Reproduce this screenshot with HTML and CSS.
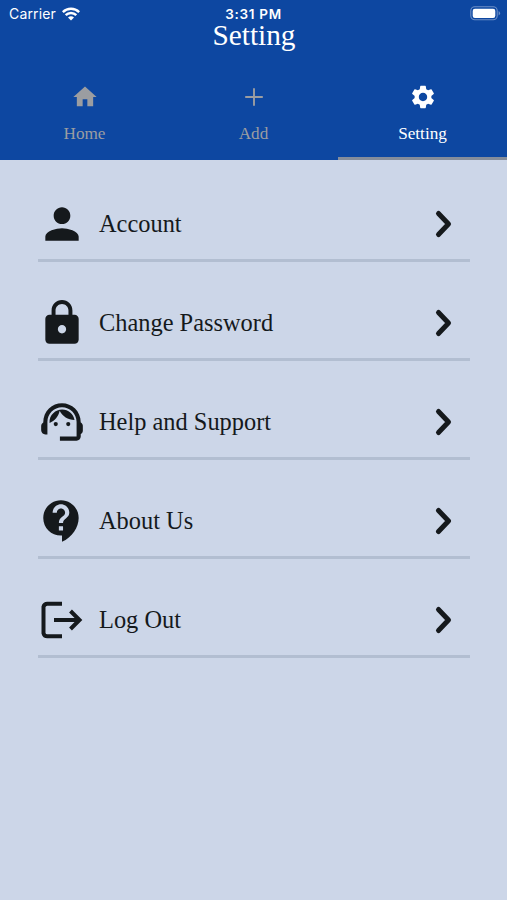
FILE: index.html
```html
<!DOCTYPE html>
<html lang="en">
<head>
<meta charset="utf-8">
<title>Setting</title>
<link rel="stylesheet" href="styles.css">
</head>
<body>
<header class="header">
  <div class="status">
    <div class="carrier"><span>Carrier</span>
      <svg width="18" height="14" viewBox="0 0 18 14"><g fill="none" stroke="#fff" stroke-width="2.5"><path d="M.8 5.1a11.7 11.7 0 0 1 16.4 0"/><path d="M3.7 8.2a7.5 7.5 0 0 1 10.6 0"/></g><path fill="#fff" d="M9 13.6 6 10.6a4.3 4.3 0 0 1 6 0z"/></svg>
    </div>
    <div class="time">3:31 PM</div>
    <div class="battery">
      <svg width="31" height="15" viewBox="0 0 31 15"><rect x=".8" y=".8" width="26.4" height="13" rx="4" fill="none" stroke="#6d8fc6" stroke-width="1.1"/><rect x="2.7" y="2.7" width="22.6" height="9.2" rx="2.2" fill="#fff"/><path d="M28.6 5v4.6q1.5-.8 1.5-2.3T28.6 5z" fill="#6d8fc6"/></svg>
    </div>
  </div>
  <h1 class="title">Setting</h1>
  <nav class="tabs">
    <div class="tab"><svg width="28" height="28" viewBox="0 0 24 24"><path fill="currentColor" d="M10 20v-6h4v6h5v-8h3L12 3 2 12h3v8z"/></svg><span>Home</span></div>
    <div class="tab"><svg width="28" height="28" viewBox="0 0 28 28"><path fill="none" stroke="currentColor" stroke-width="1.9" d="M5.2 14h17.6M14 5.2v17.6"/></svg><span>Add</span></div>
    <div class="tab active"><svg width="28" height="28" viewBox="0 0 24 24"><path fill="currentColor" d="M19.14 12.94c.04-.3.06-.61.06-.94 0-.32-.02-.64-.07-.94l2.03-1.58c.18-.14.23-.41.12-.61l-1.92-3.32c-.12-.22-.37-.29-.59-.22l-2.39.96c-.5-.38-1.03-.7-1.62-.94l-.36-2.54c-.04-.24-.24-.41-.48-.41h-3.84c-.24 0-.43.17-.47.41l-.36 2.54c-.59.24-1.13.57-1.62.94l-2.39-.96c-.22-.08-.47 0-.59.22L2.74 8.87c-.12.21-.08.47.12.61l2.03 1.58c-.05.3-.09.63-.09.94s.02.64.07.94l-2.03 1.58c-.18.14-.23.41-.12.61l1.92 3.32c.12.22.37.29.59.22l2.39-.96c.5.38 1.03.7 1.62.94l.36 2.54c.05.24.24.41.48.41h3.84c.24 0 .44-.17.47-.41l.36-2.54c.59-.24 1.13-.56 1.62-.94l2.39.96c.22.08.47 0 .59-.22l1.92-3.32c.12-.22.07-.47-.12-.61l-2.01-1.58zM12 15.6c-1.98 0-3.6-1.62-3.6-3.6s1.62-3.6 3.6-3.6 3.6 1.62 3.6 3.6-1.62 3.6-3.6 3.6z"/></svg><span>Setting</span></div>
  </nav>
</header>
<main class="list">
  <div class="row">
    <svg class="icon" viewBox="0 0 24 24"><path d="M12 12c2.21 0 4-1.79 4-4s-1.79-4-4-4-4 1.79-4 4 1.79 4 4 4zm0 2c-2.67 0-8 1.34-8 4v2h16v-2c0-2.66-5.33-4-8-4z"/></svg>
    <span class="label">Account</span>
    <svg class="chevron" viewBox="0 0 20 30"><path d="m4.5 4.5 10 10.5-10 10.5"/></svg>
  </div>
  <div class="row">
    <svg class="icon" viewBox="0 0 24 24"><path d="M18 8h-1V6c0-2.76-2.24-5-5-5S7 3.24 7 6v2H6c-1.1 0-2 .9-2 2v10c0 1.1.9 2 2 2h12c1.1 0 2-.9 2-2V10c0-1.1-.9-2-2-2zm-6 9c-1.1 0-2-.9-2-2s.9-2 2-2 2 .9 2 2-.9 2-2 2zm3.1-9H8.9V6c0-1.71 1.39-3.1 3.1-3.1s3.1 1.39 3.1 3.1v2z"/></svg>
    <span class="label">Change Password</span>
    <svg class="chevron" viewBox="0 0 20 30"><path d="m4.5 4.5 10 10.5-10 10.5"/></svg>
  </div>
  <div class="row">
    <svg class="icon" viewBox="0 0 24 24"><path d="M21 12.22C21 6.73 16.74 3 12 3c-4.69 0-9 3.65-9 9.28-.6.34-1 .98-1 1.72v2c0 1.1.9 2 2 2h1v-6.1c0-3.87 3.13-7 7-7s7 3.13 7 7V19h-8v2h8c1.1 0 2-.9 2-2v-1.22c.59-.31 1-.92 1-1.64v-2.3c0-.7-.41-1.31-1-1.62z"/><circle cx="9" cy="13" r="1"/><circle cx="15" cy="13" r="1"/><path d="M18 11.03C17.52 8.18 15.04 6 12.05 6c-3.03 0-6.29 2.51-6.03 6.45 2.47-1.01 4.33-3.21 4.86-5.89 1.31 2.63 4 4.44 7.12 4.47z"/></svg>
    <span class="label">Help and Support</span>
    <svg class="chevron" viewBox="0 0 20 30"><path d="m4.5 4.5 10 10.5-10 10.5"/></svg>
  </div>
  <div class="row">
    <svg class="icon" viewBox="0 0 24 24"><path d="M11.5 2C6.81 2 3 5.81 3 10.5S6.81 19 11.5 19h.5v3c4.86-2.34 8-7 8-11.5C20 5.81 16.19 2 11.5 2zm1 14.5h-2v-2h2v2zm0-3.5h-2c0-3.25 3-3 3-5 0-1.1-.9-2-2-2s-2 .9-2 2h-2c0-2.21 1.79-4 4-4s4 1.79 4 4c0 2.5-3 2.75-3 5z"/></svg>
    <span class="label">About Us</span>
    <svg class="chevron" viewBox="0 0 20 30"><path d="m4.5 4.5 10 10.5-10 10.5"/></svg>
  </div>
  <div class="row">
    <svg class="icon" viewBox="0 0 50 50"><path class="line" d="M25 8.8H10.5a4 4 0 0 0-4 3v26.400a4 4 0 0 0 4 3H25M17 25h26M33.500 16l9 9-9 9"/></svg>
    <span class="label">Log Out</span>
    <svg class="chevron" viewBox="0 0 20 30"><path d="m4.5 4.5 10 10.5-10 10.5"/></svg>
  </div>
</main>
</body>
</html>
```
FILE: styles.css
```css
* { box-sizing: border-box; }
body {
  margin: 0;
  min-height: 900px;
  background: #ccd6e8;
  font-family: "Liberation Serif", "Times New Roman", serif;
  color: #15191c;
}
svg { display: block; flex: none; }
.header { height: 160px; background: #0d47a1; color: #fff; }
.status {
  display: grid;
  grid-template-columns: 1fr auto 1fr;
  height: 26px;
  padding: 0 6px 0 9px;
  align-items: center;
  font-family: Inter, sans-serif;
  font-size: 14px;
  line-height: 26px;
}
.carrier { display: flex; align-items: center; gap: 6px; letter-spacing: .15px; }
.carrier span, .time { padding-top: 1px; }
.time { font-size: 13.5px; font-weight: 600; letter-spacing: .7px; margin: 0 1px 0 -2px; }
.battery { display: flex; justify-content: flex-end; }
.title {
  margin: -8px 0 0;
  height: 35px;
  padding-left: 1px;
  text-align: center;
  font-size: 29.3px;
  font-weight: 400;
  line-height: 34px;
}
.tabs { display: grid; grid-template-columns: repeat(3, 1fr); height: 107px; }
.tab {
  display: flex;
  flex-direction: column;
  align-items: center;
  gap: 13px;
  padding-top: 30px;
  color: #9b9da1;
  font-size: 17.2px;
  line-height: 20px;
}
.active { color: #fff; border-bottom: 3px solid #858d9b; }
.list { padding: 3px 37px 0 38px; }
.row {
  display: flex;
  align-items: center;
  height: 99px;
  padding-top: 25px;
  border-bottom: 3px solid #b2bed1;
}
.icon { width: 50px; height: 50px; margin-left: -1px; fill: #15191c; }
.icon .line { fill: none; stroke: #15191c; stroke-width: 4; }
.label { margin-left: 12px; flex: 1; font-size: 24.4px; line-height: 30px; }
.chevron {
  width: 20px;
  height: 30px;
  margin-right: 16.500px;
  fill: none;
  stroke: #15191c;
  stroke-width: 5;
  stroke-linecap: round;
  stroke-linejoin: round;
}
```
